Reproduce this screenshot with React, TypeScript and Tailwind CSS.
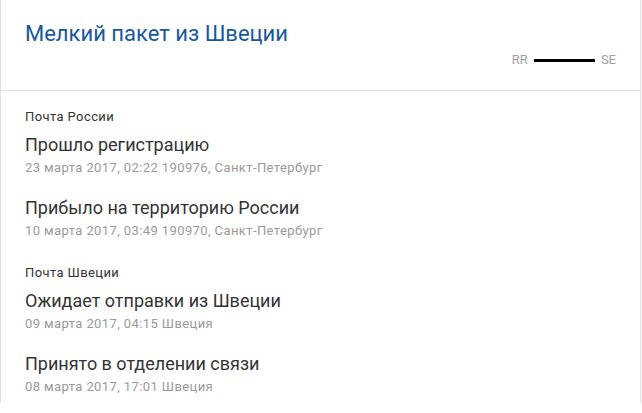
import React from 'react';

type Event = { title: string; date: string };
type Group = { carrier: string; events: Event[] };

const groups: Group[] = [
    {
        carrier: 'Почта России',
        events: [
            { title: 'Прошло регистрацию', date: '23 марта 2017, 02:22 190976, Санкт-Петербург' },
            { title: 'Прибыло на территорию России', date: '10 марта 2017, 03:49 190970, Санкт-Петербург' },
        ],
    },
    {
        carrier: 'Почта Швеции',
        events: [
            { title: 'Ожидает отправки из Швеции', date: '09 марта 2017, 04:15 Швеция' },
            { title: 'Принято в отделении связи', date: '08 марта 2017, 17:01 Швеция' },
        ],
    },
];

export default function App() {
    return (
        <div className="w-[642px] h-[413px] bg-white font-['Roboto',sans-serif]">
            <div className="w-[641px] border-x border-[#e2e2e2]">
                {/* header */}
                <header className="h-[91px] border-b border-[#e2e2e2] px-6 pt-[21px]">
                    <h1 className="text-[22px] leading-[26px] text-[#19589c]">
                        Мелкий пакет из Швеции
                    </h1>
                    <div className="mt-[5px] flex items-center justify-end gap-[6px] text-[13px] leading-4 text-[#a0a0a0]">
                        <span>RR</span>
                        <span className="block h-[3px] w-[61px] bg-black" />
                        <span>SE</span>
                    </div>
                </header>

                {/* tracking history */}
                <div className="px-6 pt-[18px] pb-[8px] text-[#333333]">
                    {groups.map((group, gi) => (
                        <section key={group.carrier} className={gi > 0 ? 'mt-[26px]' : ''}>
                            <div className="text-[13px] leading-4 tracking-[0.4px]">{group.carrier}</div>
                            {group.events.map((ev, i) => (
                                <div key={ev.title} className={i === 0 ? 'mt-[9px]' : 'mt-[21px]'}>
                                    <div className="text-[18px] leading-[22px]">{ev.title}</div>
                                    <div className="mt-1 text-[13px] leading-4 tracking-[0.4px] text-[#9a9a9a]">
                                        {ev.date}
                                    </div>
                                </div>
                            ))}
                        </section>
                    ))}
                </div>
            </div>
        </div>
    );
}
